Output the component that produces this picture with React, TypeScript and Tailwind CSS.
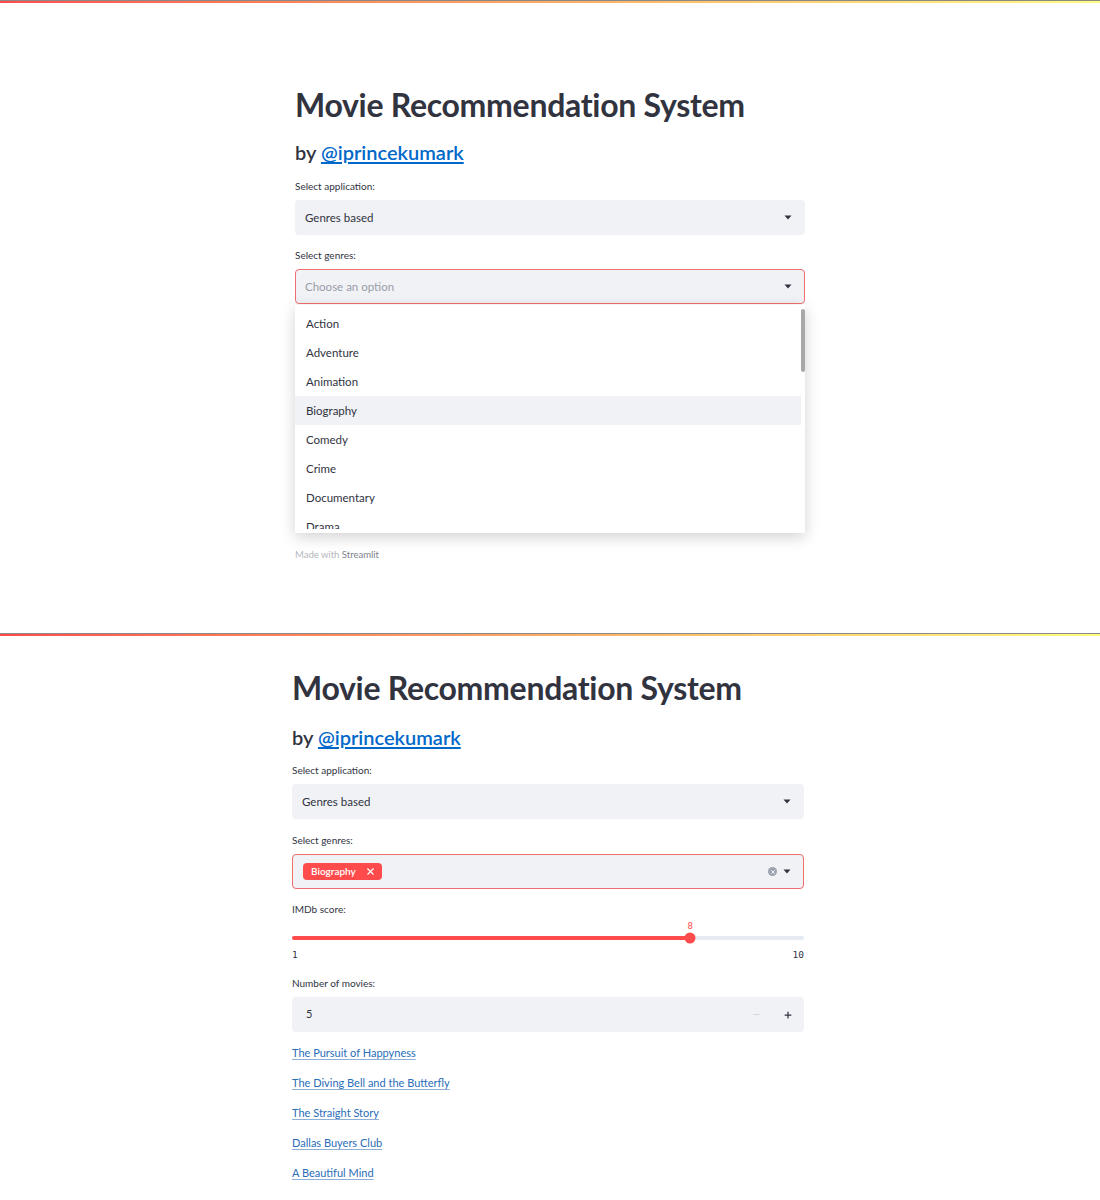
import { Minus, Plus, X } from "lucide-react";

const genres = [
  "Action",
  "Adventure",
  "Animation",
  "Biography",
  "Comedy",
  "Crime",
  "Documentary",
  "Drama",
];

const movies = [
  "The Pursuit of Happyness",
  "The Diving Bell and the Butterfly",
  "The Straight Story",
  "Dallas Buyers Club",
  "A Beautiful Mind",
];

function Caret() {
  return (
    <svg width="8" height="5" viewBox="0 0 8 5" className="shrink-0">
      <path d="M0.5 0.5 L7.5 0.5 L4 4.5 Z" fill="#31333f" />
    </svg>
  );
}

function TopBar() {
  return (
    <div>
      <div className="h-px bg-[#8a8a8a]" />
      <div className="h-[2px] bg-linear-to-r from-[#ff4b4b] to-[#fffd80]" />
    </div>
  );
}

function Heading({ gap }: { gap: string }) {
  return (
    <>
      <h1 className="text-[32px] leading-[38px] font-bold text-[#31333f] tracking-[-0.3px]">
        Movie Recommendation System
      </h1>
      <h3 className={"text-[20px] leading-[26px] font-semibold text-[#31333f] " + gap}>
        by{" "}
        <a href="#" className="text-[#0068c9] underline underline-offset-2">
          @iprincekumark
        </a>
      </h3>
    </>
  );
}

function Label({ children }: { children: string }) {
  return <div className="text-[10px] leading-[14px] text-[#31333f]">{children}</div>;
}

function AppSelect() {
  return (
    <div className="mt-[7px] flex h-[35px] items-center justify-between rounded-[4px] bg-[#f0f2f6] pl-[10px] pr-[13px]">
      <span className="text-[11.5px] text-[#31333f]">Genres based</span>
      <Caret />
    </div>
  );
}

export default function App() {
  return (
    <div className="w-[1100px] h-[1200px] overflow-hidden bg-white font-['Lato','Noto_Sans',sans-serif]">
      {/* first capture: dropdown open */}
      <section className="h-[633px]">
        <TopBar />
        <div className="mx-auto w-[510px] pt-[83px]">
          <Heading gap="mt-[15px]" />
          <div className="mt-[14px]">
            <Label>Select application:</Label>
          </div>
          <AppSelect />
          <div className="mt-[13px]">
            <Label>Select genres:</Label>
          </div>
          <div className="relative mt-[7px]">
            <div className="flex h-[35px] items-center justify-between rounded-[4px] border border-[#f26d6d] bg-[#f0f2f6] pl-[9px] pr-[12px]">
              <span className="text-[11.5px] text-[#9a9ca8]">Choose an option</span>
              <Caret />
            </div>
            <div className="absolute left-0 right-0 top-[36px] z-10 h-[228px] bg-white py-[4px] shadow-[0_4px_14px_rgba(0,0,0,0.18)]">
              <div className="absolute right-[0px] top-[4px] h-[63px] w-[4px] rounded-full bg-[#a8a8a8]" />
              <div className="h-[220px] overflow-hidden">
                {genres.map((g) => (
                  <div
                    key={g}
                    className={
                      "mr-[4px] flex h-[29px] items-center pl-[11px] text-[11.5px] text-[#31333f] " +
                      (g === "Biography" ? "bg-[#f0f2f6]" : "")
                    }
                  >
                    {g}
                  </div>
                ))}
              </div>
            </div>
          </div>
          <div className="mt-[244px] text-[9.5px] leading-[14px] text-[#b4b6bd]">
            Made with <span className="text-[#7d808a]">Streamlit</span>
          </div>
        </div>
      </section>

      {/* second capture: results */}
      <section>
        <TopBar />
        <div className="ml-[292px] w-[512px] pt-[33px]">
          <Heading gap="mt-[17px]" />
          <div className="mt-[13px]">
            <Label>Select application:</Label>
          </div>
          <AppSelect />
          <div className="mt-[14px]">
            <Label>Select genres:</Label>
          </div>
          <div className="mt-[7px] flex h-[35px] items-center justify-between rounded-[4px] border border-[#f26d6d] bg-[#f0f2f6] pl-[10px] pr-[12px]">
            <span className="flex h-[17px] items-center gap-[9px] rounded-[4px] bg-[#ff4b4b] pl-[8px] pr-[6px] text-[10px] font-semibold text-white">
              Biography
              <X size={11} strokeWidth={2.5} />
            </span>
            <span className="flex items-center gap-[6px]">
              <span className="flex h-[9px] w-[9px] items-center justify-center rounded-full bg-[#9ea2ae]">
                <X size={6} strokeWidth={4} className="text-[#f0f2f6]" />
              </span>
              <Caret />
            </span>
          </div>

          <div className="mt-[13px]">
            <Label>IMDb score:</Label>
          </div>
          <div className="mt-[4px]">
            <div className="relative h-[12px]">
              <span
                className="absolute top-0 -translate-x-1/2 font-['DejaVu_Sans_Mono',monospace] text-[9px] leading-[12px] text-[#ff4b4b]"
                style={{ left: `${(7 / 9) * 100}%` }}
              >
                8
              </span>
            </div>
            <div className="relative flex h-[12px] items-center">
              <div className="h-[4px] w-full rounded-full bg-[#e6eaf1]">
                <div className="h-full rounded-full bg-[#ff4b4b]" style={{ width: `${(7 / 9) * 100}%` }} />
              </div>
              <div
                className="absolute top-1/2 h-[11px] w-[11px] -translate-x-1/2 -translate-y-1/2 rounded-full bg-[#ff4b4b]"
                style={{ left: `${(7 / 9) * 100}%` }}
              />
            </div>
            <div className="mt-[5px] flex justify-between font-['DejaVu_Sans_Mono',monospace] text-[9.5px] leading-[12px] text-[#31333f]">
              <span>1</span>
              <span>10</span>
            </div>
          </div>

          <div className="mt-[15px]">
            <Label>Number of movies:</Label>
          </div>
          <div className="mt-[7px] flex h-[35px] items-center rounded-[4px] bg-[#f0f2f6]">
            <span className="flex-1 pl-[14px] text-[11px] text-[#31333f]">5</span>
            <span className="flex h-full w-[32px] items-center justify-center text-[#d0d3da]">
              <Minus size={9} strokeWidth={2.5} />
            </span>
            <span className="flex h-full w-[32px] items-center justify-center text-[#31333f]">
              <Plus size={10} strokeWidth={3} />
            </span>
          </div>

          <div className="mt-[6px]">
            {movies.map((m) => (
              <p key={m} className="text-[11px] leading-[30px]">
                <a href="#" className="text-[#2a6db8] underline decoration-[#8fb0d6] underline-offset-2">
                  {m}
                </a>
              </p>
            ))}
          </div>
        </div>
      </section>
    </div>
  );
}
